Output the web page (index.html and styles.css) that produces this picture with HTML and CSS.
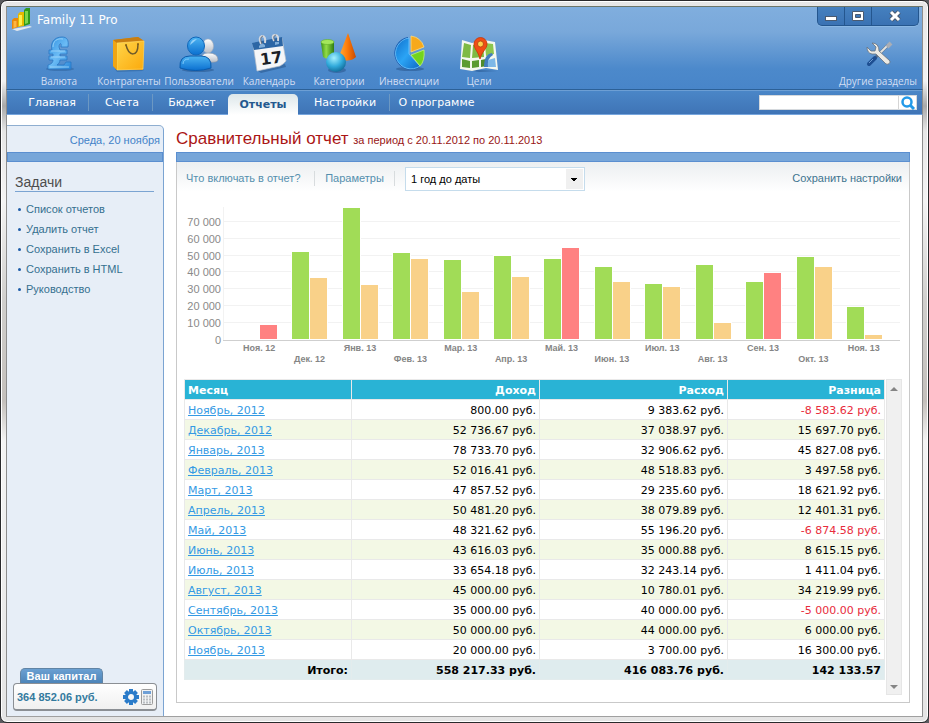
FILE: index.html
```html
<!DOCTYPE html>
<html lang="ru">
<head>
    <meta charset="UTF-8">
    <meta name="viewport" content="width=device-width, initial-scale=1.0">
    <title>Family 11 Pro</title>
    <link rel="stylesheet" href="styles.css">
</head>
<body>
    <div class="window">
        <header class="header">
            <div class="titlebar">
                <svg class="logo" viewBox="0 0 22 24">
                    <path d="M1 22 L19 19 L21 20 L6 24 Z" fill="#e4e8ee"/>
                    <path d="M1 13 L3 11 L7 11 L7 20 L1 22 Z" fill="#e8890c"/>
                    <path d="M2.5 14 H5.5 V20 L2.5 21 Z" fill="#ffb640"/>
                    <path d="M7 7 L9 5 L13 5 L13 19 L7 20 Z" fill="#e5ba00"/>
                    <path d="M8 8 H11 V18 L8 19 Z" fill="#fff04d"/>
                    <path d="M13 3 L15 1 L19 1 L19 17 L13 19 Z" fill="#2f9a1c"/>
                    <path d="M14 4 H17 V16 L14 17 Z" fill="#7ed64b"/>
                </svg>
                <span class="app-name">Family 11 Pro</span>
                <div class="window-buttons">
                    <button type="button" aria-label="Свернуть">
                        <svg width="14" height="12" viewBox="0 0 14 12"><rect x="1.5" y="6.5" width="11" height="4" fill="#fff" stroke="#4a5a70"/></svg>
                    </button>
                    <button type="button" aria-label="Развернуть">
                        <svg width="14" height="12" viewBox="0 0 14 12"><path d="M1.5 1.5 H12.5 V10.5 H1.5 Z M4.5 4.5 V7.5 H9.5 V4.5 Z" fill="#fff" fill-rule="evenodd" stroke="#4a5a70"/></svg>
                    </button>
                    <button type="button" class="close" aria-label="Закрыть">
                        <svg width="14" height="12" viewBox="0 0 14 12"><path d="M3 2 L11 10 M11 2 L3 10" stroke="#4a5a70" stroke-width="5"/><path d="M3 2 L11 10 M11 2 L3 10" stroke="#fff" stroke-width="3"/></svg>
                    </button>
                </div>
            </div>

            <div class="toolbar">
                <a href="#" class="tool">
                    <svg viewBox="0 0 40 40">
                        <defs><linearGradient id="pound" x1="0" y1="0" x2="1" y2="1"><stop offset="0" stop-color="#2c8ee0"/><stop offset=".5" stop-color="#6cbcf5"/><stop offset="1" stop-color="#2a86d8"/></linearGradient></defs>
                        <ellipse cx="21" cy="36" rx="14" ry="2" fill="#2c5f9a" opacity=".5"/>
                        <path d="M29 14 L22 14 C23 9 20 10 20 14 L21 17 H28 V21 H21 V23 H28 V27 H21 C21 30 19 31 18 32 H25 L27 29 H32 V36 H9 V32 C13 31 14 29 14 27 H10 V23 H14 V21 H10 V17 H13 C11 10 15 4 23 4 C28 4 30 7 29 14 Z" fill="url(#pound)" stroke="#2977c4" stroke-width=".8"/>
                        <path d="M14 14 C14 8 18 5 24 6 M11 34 H30 M12 18 H26 M12 24 H26" fill="none" stroke="#a6d9fb" stroke-width=".8"/>
                    </svg>
                    <span>Валюта</span>
                </a>
                <a href="#" class="tool">
                    <svg viewBox="0 0 40 40">
                        <defs><linearGradient id="bag" x1="0" y1="0" x2="1" y2="1"><stop offset="0" stop-color="#ffd54a"/><stop offset="1" stop-color="#fba90b"/></linearGradient></defs>
                        <path d="M6 36 L35 37 L33 38 L8 39 Z" fill="#2c5f9a" opacity=".5"/>
                        <path d="M4 7 L29 4 L35 8 L34 37 L8 37 L4 33 Z" fill="#d98a08"/>
                        <path d="M4 7 L29 4 L35 8 L8 11 Z" fill="#c97e10"/>
                        <path d="M8 10 L35 8 L34 36 L8 37 Z" fill="url(#bag)" stroke="#ffdf70" stroke-width=".6"/>
                        <path d="M4 7 L8 10 V37 L4 33 Z" fill="#f0a514"/>
                        <path d="M17 12 C20 24 29 24 29 11" fill="none" stroke="#6e5a2a" stroke-width="1.5"/>
                        <circle cx="17" cy="12" r="1" fill="#8c6310"/><circle cx="29" cy="11" r="1" fill="#8c6310"/>
                    </svg>
                    <span>Контрагенты</span>
                </a>
                <a href="#" class="tool">
                    <svg viewBox="0 0 40 40">
                        <defs>
                            <linearGradient id="user" x1="0" y1="0" x2="0" y2="1"><stop offset="0" stop-color="#4db4f2"/><stop offset="1" stop-color="#0a6fd0"/></linearGradient>
                            <linearGradient id="guest" x1="0" y1="0" x2="0" y2="1"><stop offset="0" stop-color="#fff"/><stop offset="1" stop-color="#b7bdc6"/></linearGradient>
                        </defs>
                        <ellipse cx="19" cy="37" rx="16" ry="2" fill="#234f86" opacity=".5"/>
                        <path d="M22 27 Q22 20 29 20 Q39 20 39 27 Q38 30 30 29 Z" fill="url(#guest)" stroke="#8e97a5" stroke-width=".6"/>
                        <ellipse cx="29" cy="13" rx="5.5" ry="7" fill="url(#guest)" stroke="#a8b0bc" stroke-width=".6"/>
                        <path d="M1 35 Q0 23 11 23 H22 Q33 23 32 35 Q17 40 1 35 Z" fill="url(#user)" stroke="#0a5aab"/>
                        <ellipse cx="17" cy="13" rx="8.5" ry="9" fill="url(#user)" stroke="#0f67ba"/>
                        <path d="M11 12 Q12 6 18 6 Q15 9 11 12 Z" fill="#b8e3ff" opacity=".7"/>
                        <path d="M4 31 Q4 26 10 26" fill="none" stroke="#7cc9fb" stroke-width="1"/>
                    </svg>
                    <span>Пользователи</span>
                </a>
                <a href="#" class="tool">
                    <svg viewBox="0 0 40 40">
                        <path d="M9 38 L36 31 L37 34 L12 40 Z" fill="#244f84" opacity=".5"/>
                        <path d="M4 11 L33 5 L37 28 L34 31 L31 33 L8 38 Z" fill="#f5f6f8" stroke="#b7bec8" stroke-width=".7"/>
                        <path d="M3 10 L33 4 L34 13 L5 17 Z" fill="#2c66a5"/>
                        <path d="M10 13 l3 -3 l3 2 v2 l-6 1 Z M26 9 l4 0 v2 l-4 1 Z" fill="#7fadd8"/>
                        <path d="M12 11 Q9 4 13 3 Q17 3 16 10 M25 8 Q22 2 26 2 Q30 2 29 8" fill="none" stroke="#d5d9df" stroke-width="2"/>
                        <path d="M13 11 Q10 4 14 3 M26 8 Q23 3 27 2" fill="none" stroke="#59616d" stroke-width=".8"/>
                        <text x="11" y="31" class="icon-day" transform="rotate(-8 20 25)">17</text>
                    </svg>
                    <span>Календарь</span>
                </a>
                <a href="#" class="tool">
                    <svg viewBox="0 0 40 40">
                        <defs>
                            <linearGradient id="cyl"><stop offset="0" stop-color="#3f9418"/><stop offset=".4" stop-color="#92dc48"/><stop offset="1" stop-color="#2f7c10"/></linearGradient>
                            <linearGradient id="cone"><stop offset="0" stop-color="#ffb43c"/><stop offset=".5" stop-color="#ff7d0c"/><stop offset="1" stop-color="#c94a00"/></linearGradient>
                            <radialGradient id="ball" cx=".4" cy=".3" r=".7"><stop offset="0" stop-color="#a4f0ff"/><stop offset=".6" stop-color="#31aadb"/><stop offset="1" stop-color="#14719f"/></radialGradient>
                        </defs>
                        <path d="M2 10 L4 24 Q9 28 15 23 L15 9 Z" fill="url(#cyl)"/>
                        <ellipse cx="8.5" cy="9" rx="6.5" ry="2.5" fill="#a4e65c" stroke="#5fae27" stroke-width=".6"/>
                        <path d="M29 0 L37 24 Q31 30 19 26 Z" fill="url(#cone)"/>
                        <ellipse cx="18" cy="37" rx="9" ry="3" fill="#234f86" opacity=".5"/>
                        <circle cx="17" cy="29" r="10" fill="url(#ball)"/>
                    </svg>
                    <span>Категории</span>
                </a>
                <a href="#" class="tool">
                    <svg viewBox="0 0 40 40">
                        <defs><linearGradient id="pie" x1="0" y1="0" x2="1" y2="1"><stop offset="0" stop-color="#0f70cc"/><stop offset=".5" stop-color="#2ba4f5"/><stop offset="1" stop-color="#0e68c4"/></linearGradient></defs>
                        <ellipse cx="21" cy="36" rx="14" ry="2" fill="#234f86" opacity=".5"/>
                        <path d="M19 4 A16.5 16.5 0 1 0 31 34 L20 21 Z" fill="#1056ae"/>
                        <path d="M20 5 A15.5 15.5 0 1 0 31 33 L20 21 Z" fill="url(#pie)" stroke="#73c9ff" stroke-width=".8"/>
                        <path d="M22 3 A16 16 0 0 1 35 14 L22 19 Z" fill="#f7a91b" stroke="#ffdc78" stroke-width=".8"/>
                        <path d="M22 22 L35 17 Q36 28 31 33 Z" fill="#73d41d" stroke="#c3f577" stroke-width=".8"/>
                    </svg>
                    <span>Инвестиции</span>
                </a>
                <a href="#" class="tool">
                    <svg viewBox="0 0 40 40">
                        <path d="M2 36 L38 38 L20 39 Z" fill="#234f86" opacity=".5"/>
                        <path d="M3 7 L13 10 L25 7 L36 9 L39 37 L27 35 L13 38 L1 36 Z" fill="#f5f8ef"/>
                        <path d="M5 10 L12 12 L11 25 L3 24 Z M14 12 L24 10 L25 24 L13 25 Z" fill="#7eba43"/>
                        <path d="M26 10 L34 11 L35 21 L27 23 Z" fill="#8cc64e"/>
                        <path d="M3 26 L11 28 L11 35 L3 34 Z M13 28 L20 27 L20 34 L13 35 Z" fill="#5b9c31"/>
                        <path d="M22 27 L27 26 L28 33 L22 34 Z" fill="#4f8c2b"/>
                        <path d="M25 34 Q25 21 33 20 L34 22 Q28 25 29 34 Z" fill="#427ebd"/>
                        <path d="M29 27 L36 25 L37 34 L29 34 Z" fill="#7db8e7"/>
                        <path d="M21 26 C19 18 15 16 15 11 A6.5 6.5 0 0 1 28 11 C28 16 23 18 21 26 Z" fill="#f04d14" stroke="#c73505" stroke-width=".8"/>
                        <circle cx="21.5" cy="11" r="3" fill="#ffd04c" stroke="#ad3d0b" stroke-width=".8"/>
                    </svg>
                    <span>Цели</span>
                </a>
                <a href="#" class="tool tool-more">
                    <svg viewBox="0 0 40 40">
                        <path d="M11 31 L30 12" stroke="#5d6f87" stroke-width="3"/>
                        <path d="M20 22 L29 13" stroke="#e3e3e0" stroke-width="2"/>
                        <path d="M29 14 L33 10" stroke="#a9aeb6" stroke-width="4"/>
                        <path d="M11 31 L17 25" stroke="#1e4f92" stroke-width="4" stroke-linecap="round"/>
                        <path d="M11 30 L15 26" stroke="#6d9bd1" stroke-width="1"/>
                        <path d="M14 10 L18 14 L17 18 L13 18 L9 14 Q9 20 14 21 L18 21 L28 31 Q32 32 32 28 L21 18 Q21 10 14 10 Z" fill="#eceae4" stroke="#66717f" stroke-width=".8"/>
                    </svg>
                    <span>Другие разделы</span>
                </a>
            </div>
        </header>

        <div class="navbar">
            <nav class="tabs">
                <a href="#">Главная</a>
                <a href="#">Счета</a>
                <a href="#">Бюджет</a>
                <a href="#" class="active">Отчеты</a>
                <a href="#">Настройки</a>
                <a href="#">О программе</a>
            </nav>
            <form class="search">
                <input type="text" aria-label="Поиск">
                <button type="button" aria-label="Найти">
                    <svg width="16" height="14" viewBox="0 0 16 14"><circle cx="7" cy="6" r="4.5" fill="none" stroke="#2299e8" stroke-width="2.5"/><path d="M10 9 L14 13" stroke="#2299e8" stroke-width="3"/></svg>
                </button>
            </form>
        </div>

        <div class="content">
            <aside class="sidebar">
                <div class="date">Среда, 20 ноября</div>
                <div class="blue-bar"></div>
                <div class="tasks">
                    <h2>Задачи</h2>
                    <ul>
                        <li><a href="#">Список отчетов</a></li>
                        <li><a href="#">Удалить отчет</a></li>
                        <li><a href="#">Сохранить в Excel</a></li>
                        <li><a href="#">Сохранить в HTML</a></li>
                        <li><a href="#">Руководство</a></li>
                    </ul>
                </div>
                <div class="capital">
                    <div class="capital-title">Ваш капитал</div>
                    <div class="capital-box">
                        <span>364 852.06 руб.</span>
                        <button type="button" aria-label="Настройка">
                            <svg width="16" height="16" viewBox="0 0 16 16">
                                <circle cx="8" cy="8" r="4.5" fill="none" stroke="#2a7bc9" stroke-width="3"/>
                                <path d="M8 0 V4 M8 12 V16 M0 8 H4 M12 8 H16 M2.5 2.5 L5 5 M11 11 L13.5 13.5 M13.5 2.5 L11 5 M5 11 L2.5 13.5" stroke="#2a7bc9" stroke-width="4"/>
                            </svg>
                        </button>
                        <button type="button" aria-label="Калькулятор">
                            <svg width="12" height="16" viewBox="0 0 12 16">
                                <rect x=".5" y=".5" width="11" height="15" rx="1" fill="#f1f2f3" stroke="#9c9c9c"/>
                                <rect x="2" y="2" width="8" height="3" fill="#6e9fd6"/>
                                <path d="M2 7.5 H10 M2 10.5 H10 M2 13.5 H10" stroke="#b9bdc2" stroke-width="2" stroke-dasharray="2 1"/>
                            </svg>
                        </button>
                    </div>
                </div>
            </aside>

            <main class="report">
                <h1>Сравнительный отчет <small>за период с 20.11.2012 по 20.11.2013</small></h1>
                <div class="blue-bar"></div>
                <div class="panel">
                    <div class="filters">
                        <a href="#">Что включать в отчет?</a>
                        <a href="#">Параметры</a>
                        <select aria-label="Период">
                            <option>1 год до даты</option>
                        </select>
                        <a href="#" class="save">Сохранить настройки</a>
                    </div>

                    <div class="chart">
                        <div class="ticks">
                            <div class="tick zero"><span>0</span></div>
                            <div class="tick"><span>10 000</span></div>
                            <div class="tick"><span>20 000</span></div>
                            <div class="tick"><span>30 000</span></div>
                            <div class="tick"><span>40 000</span></div>
                            <div class="tick"><span>50 000</span></div>
                            <div class="tick"><span>60 000</span></div>
                            <div class="tick"><span>70 000</span></div>
                        </div>
                        <div class="bars">
                            <div class="month"><i class="income" style="--v: 800"></i><i class="loss" style="--v: 9383"></i></div>
                            <div class="month"><i class="income" style="--v: 52736"></i><i class="expense" style="--v: 37038"></i></div>
                            <div class="month"><i class="income" style="--v: 78733"></i><i class="expense" style="--v: 32906"></i></div>
                            <div class="month"><i class="income" style="--v: 52016"></i><i class="expense" style="--v: 48518"></i></div>
                            <div class="month"><i class="income" style="--v: 47857"></i><i class="expense" style="--v: 29235"></i></div>
                            <div class="month"><i class="income" style="--v: 50481"></i><i class="expense" style="--v: 38079"></i></div>
                            <div class="month"><i class="income" style="--v: 48321"></i><i class="loss" style="--v: 55196"></i></div>
                            <div class="month"><i class="income" style="--v: 43616"></i><i class="expense" style="--v: 35000"></i></div>
                            <div class="month"><i class="income" style="--v: 33654"></i><i class="expense" style="--v: 32243"></i></div>
                            <div class="month"><i class="income" style="--v: 45000"></i><i class="expense" style="--v: 10780"></i></div>
                            <div class="month"><i class="income" style="--v: 35000"></i><i class="loss" style="--v: 40000"></i></div>
                            <div class="month"><i class="income" style="--v: 50000"></i><i class="expense" style="--v: 44000"></i></div>
                            <div class="month"><i class="income" style="--v: 20000"></i><i class="expense" style="--v: 3700"></i></div>
                        </div>
                        <div class="months">
                            <span>Ноя. 12</span>
                            <span>Дек. 12</span>
                            <span>Янв. 13</span>
                            <span>Фев. 13</span>
                            <span>Мар. 13</span>
                            <span>Апр. 13</span>
                            <span>Май. 13</span>
                            <span>Июн. 13</span>
                            <span>Июл. 13</span>
                            <span>Авг. 13</span>
                            <span>Сен. 13</span>
                            <span>Окт. 13</span>
                            <span>Ноя. 13</span>
                        </div>
                    </div>

                    <div class="table-area">
                        <div class="table-wrap">
                            <table>
                                <colgroup>
                                    <col class="col-month"><col class="col-sum"><col class="col-sum"><col>
                                </colgroup>
                                <thead>
                                    <tr><th>Месяц</th><th>Доход</th><th>Расход</th><th>Разница</th></tr>
                                </thead>
                                <tbody>
                                    <tr><td><a href="#">Ноябрь, 2012</a></td><td>800.00 руб.</td><td>9 383.62 руб.</td><td class="negative">-8 583.62 руб.</td></tr>
                                    <tr><td><a href="#">Декабрь, 2012</a></td><td>52 736.67 руб.</td><td>37 038.97 руб.</td><td>15 697.70 руб.</td></tr>
                                    <tr><td><a href="#">Январь, 2013</a></td><td>78 733.70 руб.</td><td>32 906.62 руб.</td><td>45 827.08 руб.</td></tr>
                                    <tr><td><a href="#">Февраль, 2013</a></td><td>52 016.41 руб.</td><td>48 518.83 руб.</td><td>3 497.58 руб.</td></tr>
                                    <tr><td><a href="#">Март, 2013</a></td><td>47 857.52 руб.</td><td>29 235.60 руб.</td><td>18 621.92 руб.</td></tr>
                                    <tr><td><a href="#">Апрель, 2013</a></td><td>50 481.20 руб.</td><td>38 079.89 руб.</td><td>12 401.31 руб.</td></tr>
                                    <tr><td><a href="#">Май, 2013</a></td><td>48 321.62 руб.</td><td>55 196.20 руб.</td><td class="negative">-6 874.58 руб.</td></tr>
                                    <tr><td><a href="#">Июнь, 2013</a></td><td>43 616.03 руб.</td><td>35 000.88 руб.</td><td>8 615.15 руб.</td></tr>
                                    <tr><td><a href="#">Июль, 2013</a></td><td>33 654.18 руб.</td><td>32 243.14 руб.</td><td>1 411.04 руб.</td></tr>
                                    <tr><td><a href="#">Август, 2013</a></td><td>45 000.00 руб.</td><td>10 780.01 руб.</td><td>34 219.99 руб.</td></tr>
                                    <tr><td><a href="#">Сентябрь, 2013</a></td><td>35 000.00 руб.</td><td>40 000.00 руб.</td><td class="negative">-5 000.00 руб.</td></tr>
                                    <tr><td><a href="#">Октябрь, 2013</a></td><td>50 000.00 руб.</td><td>44 000.00 руб.</td><td>6 000.00 руб.</td></tr>
                                    <tr><td><a href="#">Ноябрь, 2013</a></td><td>20 000.00 руб.</td><td>3 700.00 руб.</td><td>16 300.00 руб.</td></tr>
                                </tbody>
                                <tfoot>
                                    <tr><td>Итого:</td><td>558 217.33 руб.</td><td>416 083.76 руб.</td><td>142 133.57</td></tr>
                                </tfoot>
                            </table>
                        </div>
                        <div class="scrollbar">
                            <svg width="8" height="4" viewBox="0 0 8 4"><path d="M4 0 L8 4 H0 Z" fill="#858585"/></svg>
                            <svg width="8" height="4" viewBox="0 0 8 4"><path d="M0 0 H8 L4 4 Z" fill="#858585"/></svg>
                        </div>
                    </div>
                </div>
            </main>
        </div>
    </div>
</body>
</html>
```
FILE: styles.css
```css
* {
    box-sizing: border-box;
}

body {
    margin: 0;
    min-height: 100vh;
    display: flex;
    background-color: #5a5a5e;
    font-family: "Liberation Sans", Arial, sans-serif;
    font-size: 11px;
}

a {
    text-decoration: none;
}

button {
    margin: 0;
    padding: 0;
    border: 0;
    background: none;
    cursor: pointer;
}

/* window frame */
.window {
    flex: 1;
    display: flex;
    flex-direction: column;
    padding: 5px;
    border: 1px solid #29292b;
    border-radius: 7px;
    background: linear-gradient(to bottom, #e6e6e6 0, #f2f2f2 80px, #a9a9a9 105px, #e6e6e6 130px, #f4f4f4 200px, #d0cfcd 300px, #c4c0bc 400px, #f4f4f4 440px, #e4e4e4 100%);
    box-shadow: inset 0 0 0 1px #fff;
}

.header,
.navbar,
.content {
    border: 0 solid #8d8d8d;
    border-left-width: 1px;
    border-right-width: 1px;
}

.header {
    border-top: 1px solid #6c7568;
    background: linear-gradient(to bottom, #80aede 0, #79a8da 25px, #4c89cb 62px, #4885c9 100%);
}

.titlebar {
    display: flex;
    height: 26px;
    padding: 0 3px 0 4px;
}

.logo {
    width: 22px;
    height: 24px;
}

.app-name {
    margin-left: 4px;
    color: #fff;
    font-family: "DejaVu Sans", Verdana, sans-serif;
    font-size: 12px;
    line-height: 26px;
}

.window-buttons {
    display: flex;
    height: 19px;
    margin-left: auto;
    border: 1px solid #24568e;
    border-top: 0;
    border-radius: 0 0 5px 5px;
    background: linear-gradient(to bottom, #4580bf, #3a72b3);
    box-shadow: 0 1px 0 #8bb8e4;
}

.window-buttons button {
    display: flex;
    justify-content: center;
    align-items: center;
    width: 27px;
    border-right: 1px solid #24568e;
}

.window-buttons .close {
    width: 46px;
    border-right: 0;
}

.toolbar {
    display: flex;
    padding: 0 5px 0 17px;
}

.tool {
    display: flex;
    flex-direction: column;
    align-items: center;
    width: 70px;
    height: 56px;
    color: #d3def3;
    font-family: "Open Sans", Verdana, sans-serif;
    font-size: 10px;
    line-height: 16px;
    white-space: nowrap;
}

.tool svg {
    flex: none;
    width: 40px;
    height: 40px;
}

.tool-more {
    width: auto;
    margin-left: auto;
}

.icon-day {
    font-family: "DejaVu Sans", sans-serif;
    font-size: 16px;
    font-weight: bold;
    fill: #1b1f27;
}

/* tabs */
.navbar {
    display: flex;
    justify-content: space-between;
    height: 26px;
    padding-right: 5px;
    border-top: 1px solid #2c6097;
    border-bottom: 1px solid #77a6de;
    background: linear-gradient(to bottom, #4b87c8, #3f74b6);
    box-shadow: inset 0 1px 0 #6d9fd4;
}

.tabs {
    display: grid;
    grid-template-columns: 73px 64px 75px 70px 92px 90px;
    padding-left: 9px;
}

.tabs a {
    height: 17px;
    margin-top: 4px;
    padding-left: 3px;
    border-right: 1px solid #6c98c3;
    color: #fff;
    font-family: "DejaVu Sans", Verdana, sans-serif;
    font-size: 11px;
    line-height: 18px;
    text-align: center;
}

.tabs a:first-child {
    padding-left: 0;
}

.tabs a:nth-child(3),
.tabs a:last-child {
    border-right: 0;
}

.tabs .active {
    height: 21px;
    padding: 0;
    border: 0;
    border-radius: 5px 5px 0 0;
    background: linear-gradient(to bottom, #dde7ea, #fff);
    color: #24598f;
    font-weight: bold;
    line-height: 21px;
}

.search {
    display: flex;
    height: 15px;
    margin-top: 5px;
    background-color: #fff;
    border: 1px solid #d5d9dd;
}

.search input {
    width: 139px;
    padding: 0 3px;
    border: 0;
    border-right: 1px solid #d5d5d5;
    outline: 0;
    font-size: 11px;
}

.search button {
    width: 17px;
    line-height: 0;
}

/* content */
.content {
    flex: 1;
    display: flex;
    padding-top: 10px;
    border-bottom: 1px solid #a0a0a0;
    background-color: #fff;
}

.blue-bar {
    height: 10px;
    border: 1px solid #5b8fd0;
    background-color: #77a6d9;
}

.sidebar {
    flex: none;
    display: flex;
    flex-direction: column;
    width: 157px;
    border-top: 1px solid #8faed0;
    border-right: 1px solid #7ba4d2;
    border-radius: 0 5px 0 0;
    background-color: #e7eef7;
}

.date {
    height: 26px;
    padding-right: 3px;
    color: #4282c8;
    line-height: 29px;
    text-align: right;
}

.tasks {
    padding: 12px 9px 0 8px;
}

.tasks h2 {
    margin: 0;
    padding-bottom: 1px;
    border-bottom: 1px solid #7ba4d2;
    color: #4d4d4d;
    font-size: 14px;
    font-weight: normal;
    line-height: 16px;
}

.tasks ul {
    margin: 7px 0 0;
    padding: 0;
    list-style: none;
}

.tasks li {
    display: flex;
    align-items: center;
    height: 20px;
}

.tasks li::before {
    content: "";
    width: 3px;
    height: 3px;
    margin: 0 5px 0 3px;
    border-radius: 50%;
    background-color: #1c5ca8;
}

.tasks a {
    color: #35708f;
}

.capital {
    margin-top: auto;
    padding: 0 6px 5px;
}

.capital-title {
    width: 83px;
    height: 15px;
    margin-left: 7px;
    border: 1px solid #6184a5;
    border-bottom: 0;
    border-radius: 5px 5px 0 0;
    background: linear-gradient(to bottom, #6ba0d2, #4c84b8);
    color: #fff;
    font-weight: bold;
    line-height: 15px;
    text-align: center;
}

.capital-box {
    display: flex;
    align-items: center;
    gap: 2px;
    height: 28px;
    padding: 0 3px;
    border: 1px solid #8b8f94;
    border-bottom-width: 2px;
    border-radius: 4px;
    background: linear-gradient(to bottom, #fff, #f0f0f0);
}

.capital-box span {
    flex: 1;
    color: #337a9e;
    font-weight: bold;
}

.capital-box button {
    line-height: 0;
}

/* report */
.report {
    flex: 1;
    display: flex;
    flex-direction: column;
    min-width: 0;
    padding: 0 12px 13px;
}

.report h1 {
    height: 27px;
    margin: 0;
    color: #ab1515;
    font-size: 17px;
    font-weight: normal;
    line-height: 27px;
    white-space: nowrap;
}

.report small {
    color: #981515;
    font-size: 11px;
}

.panel {
    flex: 1;
    padding: 4px 7px 7px;
    border: 1px solid #c9c9c9;
    border-top: 0;
    background: linear-gradient(to bottom, #eceff1, #fff 30px);
}

.filters {
    display: flex;
    align-items: center;
    height: 25px;
}

.filters a {
    width: 80px;
    border-right: 1px solid #d8dcde;
    color: #548fae;
    line-height: 15px;
    text-align: center;
    white-space: nowrap;
}

.filters a:first-child {
    width: 131px;
    padding-left: 2px;
    text-align: left;
}

.filters .save {
    width: auto;
    margin-left: auto;
    border: 0;
    color: #40748f;
}

.filters select {
    appearance: none;
    width: 180px;
    height: 24px;
    margin-left: 10px;
    padding: 0 5px;
    border: 1px solid #c5dcec;
    border-radius: 0;
    background:
        linear-gradient(#000, #000) right 7px top 10px / 6px 1px no-repeat,
        linear-gradient(#000, #000) right 8px top 11px / 4px 1px no-repeat,
        linear-gradient(#000, #000) right 9px top 12px / 2px 1px no-repeat,
        linear-gradient(#f0f0f0, #f0f0f0) right 1px center / 17px 20px no-repeat,
        #fff;
    color: #000;
    font-family: inherit;
    font-size: 11px;
}

/* chart */
.chart {
    display: grid;
    grid-template-columns: 39px 1fr;
    grid-template-rows: 133px auto;
    margin: 16px 2px 0 0;
}

.ticks {
    grid-area: 1 / 1 / 2 / 3;
    display: flex;
    flex-direction: column-reverse;
}

.tick {
    flex: none;
    display: flex;
    align-items: flex-end;
    height: calc(10000 / 78733 * 100%);
    color: #8a8a8a;
    line-height: 0;
}

.tick span {
    width: 37px;
    margin-right: 2px;
    text-align: right;
}

.tick::after {
    content: "";
    flex: 1;
    height: 1px;
    background-color: #f2f2f2;
}

.tick.zero::after {
    visibility: hidden;
}

.bars {
    grid-area: 1 / 2;
    display: grid;
    grid-template-columns: repeat(13, 1fr);
    padding: 0 10px;
    border-left: 1px solid #f2f2f2;
}

.month {
    display: flex;
    justify-content: center;
    align-items: flex-end;
}

.month i {
    width: 19px;
    height: calc(var(--v) / 78733 * 100%);
    border: 1px solid #fff;
}

.month i + i {
    margin-left: -1px;
}

.income {
    background-color: #a1dc57;
}

.expense {
    background-color: #f9d189;
}

.loss {
    background-color: #ff8181;
}

.months {
    grid-area: 2 / 2;
    display: grid;
    grid-template-columns: repeat(13, 1fr);
    padding: 2px 11px 0;
    border-top: 1px solid #cfcfcf;
    color: #858585;
    font-size: 9px;
    font-weight: bold;
    line-height: 11px;
    text-align: center;
}

.months span:nth-child(even) {
    padding-top: 11px;
}

/* table */
.table-area {
    display: flex;
    min-height: 316px;
    margin-top: 14px;
}

.table-wrap {
    flex: 1;
}

table {
    width: 100%;
    border-collapse: collapse;
    table-layout: fixed;
    font-family: "DejaVu Sans", Verdana, sans-serif;
    font-size: 11px;
}

.col-month {
    width: 167px;
}

.col-sum {
    width: 188px;
}

th,
td {
    height: 20px;
    padding: 2px 3px 0;
    border: 1px solid #e9e9e9;
    line-height: 17px;
    text-align: right;
    white-space: nowrap;
}

th:first-child,
tbody td:first-child {
    text-align: left;
}

th {
    background-color: #29b3d5;
    color: #fff;
}

tbody tr:nth-child(even) {
    background-color: #f3f8e5;
}

tbody a {
    color: #349ae4;
    text-decoration: underline;
}

.negative {
    color: #e82c3c;
}

tfoot td {
    border-color: #e3eced;
    background-color: #dfecee;
    font-weight: bold;
}

.scrollbar {
    display: flex;
    flex-direction: column;
    justify-content: space-between;
    align-items: center;
    width: 16px;
    margin-left: 1px;
    padding: 7px 0 5px;
    border: 1px solid #e6e6e6;
    background-color: #f0f0f0;
}
```
